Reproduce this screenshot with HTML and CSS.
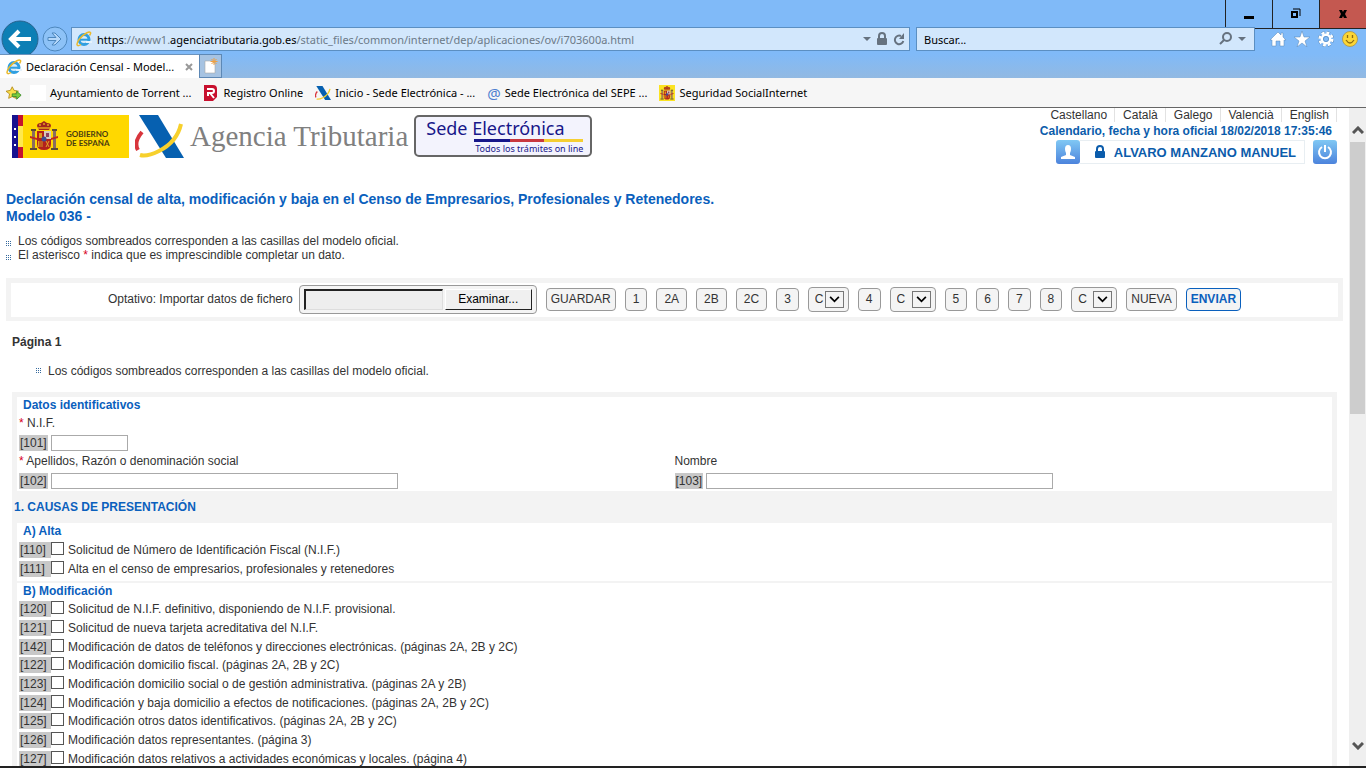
FILE: index.html
```html
<!DOCTYPE html>
<html lang="es">
<head>
  <meta charset="UTF-8">
  <title>Declaración Censal - Modelo 036</title>
  <link rel="stylesheet" href="styles.css">
</head>
<body>
  <svg class="defs" width="0" height="0">
    <symbol id="ie" viewBox="0 0 16 16">
      <circle cx="8" cy="8.5" r="5" fill="#d8ecfa" stroke="#2f9fe0" stroke-width="3"/>
      <path d="M4 8.700h10" stroke="#2f9fe0" stroke-width="2"/>
      <path d="M10 10h6v2h-6z" fill="#e6f3fc"/>
      <path d="M13.500 4.500C16 1 14 .2 10.500 2 5 5 .8 10.500 1 13.500c.3 2 2.500 1 4 0" fill="none" stroke="#eab92c" stroke-width="1.500"/>
    </symbol>
    <symbol id="aeat" viewBox="0 0 49 43">
      <path d="M7 17C1 24 0 30 3 35" fill="none" stroke="#d8353c" stroke-width="4"/>
      <path d="M4 0h19l26 43H31z" fill="#0660b0"/>
      <path d="M5 40Q12 42 24 36Q42 27 46 9" fill="none" stroke="#f7d02c" stroke-width="4"/>
    </symbol>
    <symbol id="shield" viewBox="0 0 28 30">
      <path d="M7 5q0-3 4-3l3-2 3 2q4 0 4 3l-2 4H9z" fill="#a3261d"/>
      <path d="M8 7h12M9 4h2m2-1h2m2 1h2" stroke="#e5a61d" stroke-width="1.500"/>
      <path d="M2 10h3v17H2zM23 10h3v17h-3z" fill="#8a6c60"/>
      <path d="M1 8h5v2H1zm21 0h5v2h-5zM0 27h7v2H0zm21 0h7v2h-7z" fill="#5d4b33"/>
      <path d="M0 15l7 2v2l-7-2zM28 15l-7 2v2l7-2z" fill="#c0281f"/>
      <path d="M7 10h14v13q0 6-7 6t-7-6z" fill="#b3201c"/>
      <path d="M14 10h7v8h-7z" fill="#d8c9bc"/>
      <path d="M9 12h3v5H9zM8 20h5v6H8z" fill="#dd9b20"/>
      <path d="M10 20v6m2-6v6" stroke="#a51c1c"/>
      <path d="M16 12h3v4h-3z" fill="#8e3f62"/>
      <path d="M16 20l3 6m0-6l-3 6" stroke="#e0a42a"/>
      <circle cx="14" cy="18" r="2.500" fill="#3c4b91"/>
    </symbol>
    <symbol id="lock" viewBox="0 0 12 14">
      <path d="M3 7V4a3 3 0 0 1 6 0v3" fill="none" stroke="currentColor" stroke-width="2"/>
      <rect x="1" y="6" width="10" height="7" rx="1" fill="currentColor"/>
    </symbol>
    <symbol id="chevron" viewBox="0 0 12 8">
      <path d="M1 1l5 5 5-5" fill="none" stroke="currentColor"/>
    </symbol>
    <symbol id="caret" viewBox="0 0 8 4">
      <path d="M0 0h8L4 4z" fill="currentColor"/>
    </symbol>
  </svg>

  <header class="browser">
    <div class="titlebar">
      <button class="win" aria-label="Minimizar"><svg width="10" height="14"><path d="M0 9h10v3H0z"/></svg></button>
      <button class="win" aria-label="Restaurar"><svg width="12" height="12"><path d="M3 1h7v7" fill="none" stroke="#000" stroke-width="1"/><path d="M2 4h5v5H2z" fill="none" stroke="#000" stroke-width="2"/></svg></button>
      <button class="win close" aria-label="Cerrar"><svg width="10" height="10"><path d="M1 1h3l1 2 1-2h3L7 5l2 4H6L5 7 4 9H1l2-4z"/></svg></button>
    </div>

    <div class="navbar">
      <button class="back" aria-label="Atrás"><svg width="38" height="38" viewBox="0 0 38 38"><circle cx="19" cy="19" r="18" fill="#0d7fb5" stroke="#28648f"/><path d="M10 19h20M18 11l-8 8 8 8" fill="none" stroke="#fff" stroke-width="4"/></svg></button>
      <button class="forward" aria-label="Adelante"><svg width="26" height="26" viewBox="0 0 26 26"><circle cx="13" cy="13" r="12" fill="#8dc2f7" stroke="#4d87bd"/><path d="M6 11.500h8l-4-4.500h3l6 6-6 6h-3l4-4.500H6z" fill="#b5d8fa" stroke="#4d87bd"/></svg></button>
      <div class="address">
        <svg width="16" height="16"><use href="#ie"/></svg>
        <span class="url"><b>https</b>://www1.<b>agenciatributaria.gob.es</b>/static_files/common/internet/dep/aplicaciones/ov/i703600a.html</span>
        <svg width="8" height="4"><use href="#caret"/></svg>
        <svg width="12" height="14"><use href="#lock"/></svg>
        <svg width="12" height="14" viewBox="0 0 12 14"><path d="M8 4A4.300 4.300 0 1 0 10.300 9" fill="none" stroke="currentColor" stroke-width="2"/><path d="M11 1v6H6z" fill="currentColor"/></svg>
      </div>
      <div class="search">
        <input type="text" aria-label="Buscar" value="Buscar...">
        <svg width="14" height="14" viewBox="0 0 14 14"><circle cx="8" cy="5" r="4" fill="none" stroke="currentColor" stroke-width="2"/><path d="M5 8l-4 4" stroke="currentColor" stroke-width="2"/></svg>
        <svg width="8" height="4"><use href="#caret"/></svg>
      </div>
      <div class="tools">
        <button aria-label="Inicio"><svg width="16" height="16" viewBox="0 0 16 16"><path d="M8 1L0 9h2v6h4v-5h4v5h4V9h2l-3-3V2h-2v2z" fill="#fff" stroke="#5585b5" stroke-width=".5"/></svg></button>
        <button aria-label="Favoritos"><svg width="16" height="16" viewBox="0 0 16 16"><path d="M8 0l2 6h6l-5 4 2 6-5-4-5 4 2-6-5-4h6z" fill="#fff" stroke="#5585b5" stroke-width=".5"/></svg></button>
        <button aria-label="Herramientas"><svg width="16" height="16" viewBox="0 0 16 16"><circle cx="8" cy="8" r="6.500" fill="none" stroke="#4d7fb0" stroke-width="3" stroke-dasharray="3.100 2"/><circle cx="8" cy="8" r="6.300" fill="none" stroke="#fff" stroke-width="2.600" stroke-dasharray="2.900 2"/><circle cx="8" cy="8" r="4.200" fill="none" stroke="#fff" stroke-width="2.400"/><circle cx="8" cy="8" r="2.600" fill="none" stroke="#4d7fb0" stroke-width=".6"/></svg></button>
        <button aria-label="Comentarios"><svg width="16" height="16" viewBox="0 0 16 16"><circle cx="8" cy="8" r="7.500" fill="#fbd637" stroke="#a98d3d" stroke-width=".7"/><path d="M4 9q4 6 8 0M5.500 4v3M10.500 4v3" fill="none" stroke="#8a6a14" stroke-width="1.300"/></svg></button>
      </div>
    </div>

    <div class="tabs">
      <div class="tab">
        <svg width="16" height="16"><use href="#ie"/></svg>
        <span>Declaración Censal - Model...</span>
        <button aria-label="Cerrar pestaña"><svg width="8" height="8"><path d="M1 1l6 6m0-6L1 7" stroke="#999" stroke-width="2"/></svg></button>
      </div>
      <button class="newtab" aria-label="Nueva pestaña"><svg width="14" height="16" viewBox="0 0 14 16"><path d="M1 3h7l3 3v9H1z" fill="#fff" stroke="#aaa" stroke-width=".6"/><path d="M10 0v7M6.500 3.500h7M7.500 1l5 5m0-5l-5 5" stroke="#f0a040"/></svg></button>
    </div>

    <nav class="favorites">
      <button aria-label="Agregar a favoritos"><svg width="16" height="16" viewBox="0 0 18 16"><path d="M7 1l2 4 5 1-4 3 1 5-4-2-4 2 1-5-4-3 5-1z" fill="#fbe04a" stroke="#b78e1d"/><path d="M7 9h5V6l5 4.500-5 4.500v-3H7z" fill="#7ccf3d" stroke="#3b8a2a"/></svg></button>
      <a href="#"><svg width="16" height="16"><path d="M0 0h16v16H0z" fill="#fff"/></svg>Ayuntamiento de Torrent ...</a>
      <a href="#"><svg width="16" height="16" viewBox="0 0 16 16"><path d="M1 0h9q4 0 4 4v8l-4 4H1z" fill="#c8102e"/><path d="M4 4h5q2 0 2 2t-2 2H5v3m2-3l4 5" fill="none" stroke="#fff" stroke-width="2"/></svg>Registro Online</a>
      <a href="#"><svg width="16" height="14"><use href="#aeat"/></svg>Inicio - Sede Electrónica - ...</a>
      <a href="#"><span class="at">@</span>Sede Electrónica del SEPE ...</a>
      <a href="#"><svg width="16" height="16" viewBox="0 0 16 16"><path d="M0 0h16v16H0z" fill="#fbe322"/><use href="#shield" x="1" y="1" width="14" height="14"/></svg>Seguridad SocialInternet</a>
    </nav>
  </header>

  <div class="viewport">
    <main>
      <div class="masthead">
        <div class="brand">
          <svg class="gob" width="117" height="43" viewBox="0 0 117 43" role="img" aria-label="Gobierno de España">
            <path d="M0 0h117v43H0z" fill="#ffd800"/>
            <path d="M0 0h6v43H0z" fill="#17128f"/>
            <path d="M6 0h5v11H6zM6 32h5v11H6z" fill="#c4122f"/>
            <path d="M6 11h5v21H6z" fill="#ffe94d"/>
            <path d="M2 13h2v2H2zm0 8h2v2H2zm0 8h2v2H2z" fill="#fff"/>
            <use href="#shield" x="18" y="6" width="28" height="30"/>
            <text x="54" y="22">GOBIERNO</text>
            <text x="54" y="31">DE ESPAÑA</text>
          </svg>
          <svg width="49" height="43"><use href="#aeat"/></svg>
          <span class="agency">Agencia Tributaria</span>
          <div class="sede">
            <span class="sede-name">Sede Electrónica</span>
            <span class="sede-rule"></span>
            <span class="sede-sub">Todos los trámites on line</span>
          </div>
        </div>
        <div class="session">
          <ul class="langs">
            <li><a href="#">Castellano</a></li>
            <li><a href="#">Català</a></li>
            <li><a href="#">Galego</a></li>
            <li><a href="#">Valencià</a></li>
            <li><a href="#">English</a></li>
          </ul>
          <a class="clock" href="#">Calendario, fecha y hora oficial 18/02/2018 17:35:46</a>
          <div class="user">
            <button class="badge" aria-label="Usuario"><svg width="16" height="16" viewBox="0 0 16 16"><path d="M8 1q3 0 3 4 0 2-1 4v2l5 2v2H1v-2l5-2V9Q5 7 5 5q0-4 3-4z" fill="#fff"/></svg></button>
            <a class="username" href="#"><svg width="12" height="14"><use href="#lock"/></svg>ALVARO MANZANO MANUEL</a>
            <button class="badge" aria-label="Desconectar"><svg width="16" height="16" viewBox="0 0 16 16"><path d="M5 3a6 6 0 1 0 6 0M8 1v7" fill="none" stroke="#fff" stroke-width="2"/></svg></button>
          </div>
        </div>
      </div>

      <h1>Declaración censal de alta, modificación y baja en el Censo de Empresarios, Profesionales y Retenedores.<br>Modelo 036 -</h1>

      <ul class="notes">
        <li>Los códigos sombreados corresponden a las casillas del modelo oficial.</li>
        <li><span>El asterisco <span class="req">*</span> indica que es imprescindible completar un dato.</span></li>
      </ul>

      <div class="toolbar">
        <div class="import">
          <label for="fichero">Optativo: Importar datos de fichero</label>
          <div class="file">
            <input type="text" id="fichero" readonly>
            <button>Examinar...</button>
          </div>
        </div>
        <button class="btn wide">GUARDAR</button>
        <button class="btn">1</button>
        <button class="btn">2A</button>
        <button class="btn">2B</button>
        <button class="btn">2C</button>
        <button class="btn">3</button>
        <div class="pick small"><select aria-label="Copia de página 3"><option>C</option></select><svg width="12" height="8"><use href="#chevron"/></svg></div>
        <button class="btn">4</button>
        <div class="pick"><select aria-label="Copia de página 4"><option>C</option></select><svg width="12" height="8"><use href="#chevron"/></svg></div>
        <button class="btn">5</button>
        <button class="btn">6</button>
        <button class="btn">7</button>
        <button class="btn">8</button>
        <div class="pick"><select aria-label="Copia de página 8"><option>C</option></select><svg width="12" height="8"><use href="#chevron"/></svg></div>
        <button class="btn wide">NUEVA</button>
        <button class="btn wide send">ENVIAR</button>
      </div>

      <h2>Página 1</h2>
      <ul class="notes inner">
        <li>Los códigos sombreados corresponden a las casillas del modelo oficial.</li>
      </ul>

      <form class="page">
        <section class="block last">
          <h3>Datos identificativos</h3>
          <div class="fields">
            <div class="field">
              <label for="c101"><span class="req">*</span> N.I.F.</label>
              <div class="entry"><span class="code">[101]</span><input type="text" id="c101" class="short"></div>
            </div>
            <div></div>
            <div class="field">
              <label for="c102"><span class="req">*</span> Apellidos, Razón o denominación social</label>
              <div class="entry"><span class="code">[102]</span><input type="text" id="c102"></div>
            </div>
            <div class="field">
              <label for="c103">Nombre</label>
              <div class="entry"><span class="code">[103]</span><input type="text" id="c103"></div>
            </div>
          </div>
        </section>

        <h2 class="part">1. CAUSAS DE PRESENTACIÓN</h2>

        <section class="block">
          <h3>A) Alta</h3>
          <ul class="options">
            <li><span class="code">[110]</span><input type="checkbox" id="c110"><label for="c110">Solicitud de Número de Identificación Fiscal (N.I.F.)</label></li>
            <li><span class="code">[111]</span><input type="checkbox" id="c111"><label for="c111">Alta en el censo de empresarios, profesionales y retenedores</label></li>
          </ul>
        </section>

        <section class="block rest">
          <h3>B) Modificación</h3>
          <ul class="options">
            <li><span class="code">[120]</span><input type="checkbox" id="c120"><label for="c120">Solicitud de N.I.F. definitivo, disponiendo de N.I.F. provisional.</label></li>
            <li><span class="code">[121]</span><input type="checkbox" id="c121"><label for="c121">Solicitud de nueva tarjeta acreditativa del N.I.F.</label></li>
            <li><span class="code">[142]</span><input type="checkbox" id="c142"><label for="c142">Modificación de datos de teléfonos y direcciones electrónicas. (páginas 2A, 2B y 2C)</label></li>
            <li><span class="code">[122]</span><input type="checkbox" id="c122"><label for="c122">Modificación domicilio fiscal. (páginas 2A, 2B y 2C)</label></li>
            <li><span class="code">[123]</span><input type="checkbox" id="c123"><label for="c123">Modificación domicilio social o de gestión administrativa. (páginas 2A y 2B)</label></li>
            <li><span class="code">[124]</span><input type="checkbox" id="c124"><label for="c124">Modificación y baja domicilio a efectos de notificaciones. (páginas 2A, 2B y 2C)</label></li>
            <li><span class="code">[125]</span><input type="checkbox" id="c125"><label for="c125">Modificación otros datos identificativos. (páginas 2A, 2B y 2C)</label></li>
            <li><span class="code">[126]</span><input type="checkbox" id="c126"><label for="c126">Modificación datos representantes. (página 3)</label></li>
            <li><span class="code">[127]</span><input type="checkbox" id="c127"><label for="c127">Modificación datos relativos a actividades económicas y locales. (página 4)</label></li>
          </ul>
        </section>
      </form>
    </main>

    <div class="scrollbar">
      <svg class="up" width="12" height="8"><use href="#chevron"/></svg>
      <div class="track"><div class="thumb"></div></div>
      <svg width="12" height="8"><use href="#chevron"/></svg>
    </div>
  </div>
  <div class="edge"></div>
</body>
</html>
```
FILE: styles.css
```css
* {
  box-sizing: border-box;
}
body {
  margin: 0;
  height: 100vh;
  overflow: hidden;
  display: flex;
  flex-direction: column;
  background: #fff;
  color: #333;
  font-family: "Liberation Sans", Arial, sans-serif;
  font-size: 12px;
}
button, input, select {
  font: inherit;
  color: inherit;
  margin: 0;
  padding: 0;
  border: 0;
  background: none;
}
svg {
  flex: none;
}
ul {
  list-style: none;
  margin: 0;
  padding: 0;
}
a {
  color: inherit;
  text-decoration: none;
}
.defs {
  position: absolute;
}

/* browser window */
.browser {
  background: #80baf8;
  color: #000;
  font-family: "Noto Sans", "Open Sans", sans-serif;
  font-size: 11px;
}
.titlebar {
  height: 27px;
  display: flex;
  justify-content: flex-end;
}
.win {
  width: 47px;
  height: 29px;
  display: flex;
  align-items: center;
  justify-content: center;
  border: 1px solid #222;
  border-top: 0;
  border-right: 0;
}
.win.close {
  background: #c45850;
}
.navbar {
  height: 27px;
  padding: 0 8px 3px 1px;
  display: flex;
  align-items: center;
}
.back, .forward {
  display: flex;
}
.forward {
  margin: 0 3px;
}
.address, .search {
  height: 24px;
  display: flex;
  align-items: center;
  background: #d2e7fc;
  border: 1px solid #5b8fc2;
  color: #66727f;
}
.address {
  flex: 1;
  padding: 0 4px;
  gap: 5px;
}
.url {
  flex: 1;
  color: #6c7a88;
}
.url b {
  font-weight: normal;
  color: #000;
}
.search {
  width: 339px;
  margin: 0 15px 0 6px;
  padding: 0 8px 0 7px;
  gap: 5px;
}
.search input {
  flex: 1;
  color: #000;
}
.tools {
  display: flex;
  gap: 8px;
}
.tools button, .tab button, .favorites button {
  display: flex;
}
.tabs {
  position: relative;
  height: 24px;
  display: flex;
  background: linear-gradient(#80baf8, #92b9e2);
}
.tab {
  width: 199px;
  display: flex;
  align-items: center;
  gap: 4px;
  padding: 0 6px;
  background: #fff;
  border-top: 1px solid #6b93bd;
}
.tab span {
  flex: 1;
  white-space: nowrap;
}
.newtab {
  width: 23px;
  display: flex;
  align-items: center;
  justify-content: center;
  background: #a6c3e2;
  border: 1px solid #5d88b5;
}
.favorites {
  height: 30px;
  display: flex;
  align-items: center;
  padding: 0 6px;
  background: #f6f6f6;
  border-bottom: 1px solid #666;
}
.favorites button {
  margin-right: 8px;
}
.favorites a {
  display: flex;
  align-items: center;
  gap: 4px;
  margin-right: 12px;
}
.at {
  color: #4f7fd0;
  font-size: 15px;
}

/* page area */
.viewport {
  flex: 1;
  min-height: 0;
  display: flex;
}
main {
  flex: 1;
  min-width: 0;
  display: flex;
  flex-direction: column;
  padding: 0 6px;
  overflow: hidden;
}
.masthead {
  display: flex;
  justify-content: space-between;
  padding: 0 6px;
  height: 83px;
}
.brand {
  display: flex;
  align-items: flex-start;
  gap: 6px;
  padding-top: 7px;
}
.gob text {
  font: bold 8px Lato, sans-serif;
  fill: #4a3c10;
}
.agency {
  font-family: "Liberation Serif", serif;
  font-size: 29px;
  line-height: 43px;
  color: #808080;
  white-space: nowrap;
}
.sede {
  width: 178px;
  height: 42px;
  display: grid;
  justify-items: end;
  align-content: center;
  padding: 0 7px;
  border: 2px solid #666;
  border-radius: 5px;
  background: #f3f3fd;
  color: #17178a;
  font-family: "Noto Sans", sans-serif;
}
.sede-name {
  justify-self: start;
  padding-left: 3px;
  font-size: 18px;
  line-height: 22px;
}
.sede-rule {
  width: 109px;
  height: 3px;
  background: linear-gradient(90deg, #17178a 33%, #c8383e 33% 64%, #f5cf33 64%);
}
.sede-sub {
  font-size: 9px;
  line-height: 13px;
}
.session {
  display: flex;
  flex-direction: column;
  align-items: flex-end;
}
.langs {
  display: flex;
  line-height: 14px;
}
.langs li {
  padding: 0 7px 0 8px;
  border-right: 1px solid #e2e2e2;
}
.clock {
  padding: 2px 5px 0 0;
  line-height: 14px;
  font-weight: bold;
  color: #0b5cab;
}
.user {
  display: flex;
  align-items: center;
  padding-top: 2px;
}
.badge {
  width: 24px;
  height: 24px;
  display: flex;
  align-items: center;
  justify-content: center;
  border-radius: 3px;
  background: linear-gradient(#80c8f4, #4c83dc);
}
.username {
  display: flex;
  align-items: center;
  gap: 8px;
  height: 24px;
  margin-right: 8px;
  padding: 0 8px 0 14px;
  border: 1px solid #e8eef2;
  border-left: 0;
  font-size: 13px;
  font-weight: bold;
  color: #0b5cab;
}
h1 {
  margin: 0;
  font-size: 14px;
  line-height: 17px;
  color: #0a60bd;
}
.notes {
  padding-top: 9px;
  line-height: 14px;
}
.notes li {
  display: flex;
  align-items: center;
  gap: 6px;
}
.notes li::before {
  content: "";
  width: 6px;
  height: 6px;
  margin-top: 5px;
  background: repeating-linear-gradient(90deg, transparent 0 1px, #fff 1px 2px), repeating-linear-gradient(#35699c 0 1px, #fff 1px 2px);
}
.notes.inner {
  padding: 15px 30px 14px;
}
.notes.inner li::before {
  margin-top: 0;
}
.req {
  color: #d8001c;
}

/* button bar */
.toolbar {
  display: flex;
  align-items: center;
  justify-content: center;
  gap: 9px;
  margin-top: 16px;
  padding-bottom: 2px;
  height: 43px;
  border: 5px solid #f3f3f3;
  border-bottom-width: 4px;
}
.import {
  display: flex;
  align-items: center;
  gap: 6px;
}
.file {
  display: flex;
  gap: 2px;
  padding: 3px 4px;
  border: 1px solid #999;
  border-radius: 4px;
  background: #f4f4f4;
}
.file input {
  width: 139px;
  height: 21px;
  background: #eee;
  border: 1px solid #ddd;
  border-top: 2px solid #222;
  border-left: 2px solid #222;
}
.file button {
  width: 87px;
  height: 21px;
  background: #f0f0f0;
  border: 1px solid #fff;
  border-right-color: #222;
  border-bottom-color: #222;
  color: #000;
}
.btn {
  height: 23px;
  padding: 0 7px;
  border: 1px solid #999;
  border-radius: 4px;
  background: #f4f4f4;
}
.btn.wide {
  padding: 0 4px;
}
.btn.send {
  border-color: #0a60bd;
  color: #0a60bd;
  font-weight: bold;
}
.pick {
  position: relative;
  width: 46px;
  height: 25px;
  border: 1px solid #999;
  border-radius: 4px;
  background: #f4f4f4;
}
.pick.small {
  width: 41px;
}
.pick select {
  appearance: none;
  width: 100%;
  height: 100%;
  padding-left: 6px;
}
.pick svg {
  position: absolute;
  right: 4px;
  top: 3px;
  width: 19px;
  height: 17px;
  padding: 4px 3px;
  border: 1px solid #777;
  color: #000;
  stroke-width: 2;
  pointer-events: none;
}

/* form */
h2 {
  margin: 0;
  padding: 14px 6px 0;
  font-size: 12px;
  line-height: 14px;
}
.page {
  flex: 1;
  display: flex;
  flex-direction: column;
  margin: 0 6px;
  padding: 5px 5px 0;
  background: #f3f3f3;
}
.block {
  margin-bottom: 2px;
  padding: 0 2px 3px;
  background: #fff;
}
.block.last {
  margin-bottom: 0;
  padding-bottom: 1px;
}
.block.rest {
  flex: 1;
  display: flex;
  flex-direction: column;
  margin: 0;
  padding-bottom: 0;
}
h3 {
  margin: 0;
  padding: 1px 4px 2px;
  font-size: 12px;
  line-height: 14px;
  color: #0a60bd;
}
.part {
  margin-left: -3px;
  padding: 9px 0;
  color: #0a60bd;
}
.fields {
  display: grid;
  grid-template-columns: 1fr 1fr;
}
.field label {
  display: block;
  line-height: 19px;
}
.entry {
  display: flex;
  align-items: center;
  gap: 3px;
  height: 19px;
}
.entry input {
  width: 347px;
  height: 16px;
  border: 1px solid #aaa;
  background: #fff;
}
.entry input.short {
  width: 77px;
}
.code {
  padding: 0 1px;
  line-height: 16px;
  background: #c8c8c8;
}
.options li {
  display: flex;
  align-items: center;
  min-height: 19px;
}
.rest .options {
  flex: 1;
  display: grid;
  grid-auto-rows: 1fr;
}
.rest .options li {
  min-height: 18px;
}
.options .code {
  width: 32px;
}
.options input {
  appearance: none;
  width: 13px;
  height: 13px;
  margin: 0 4px 3px 0;
  border: 1px solid #555;
  background: #fff;
}

/* scrollbar */
.scrollbar {
  width: 17px;
  display: flex;
  flex-direction: column;
  align-items: center;
  background: #efefef;
  color: #555;
  stroke-width: 3;
  padding: 18px 1px;
}
.scrollbar .up {
  transform: rotate(180deg);
}
.track {
  flex: 1;
  width: 100%;
  padding: 8px 0;
}
.thumb {
  height: 46%;
  background: #cdcdcd;
}
.edge {
  position: fixed;
  left: 0;
  right: 0;
  bottom: 0;
  height: 2px;
  background: #222;
}
```
